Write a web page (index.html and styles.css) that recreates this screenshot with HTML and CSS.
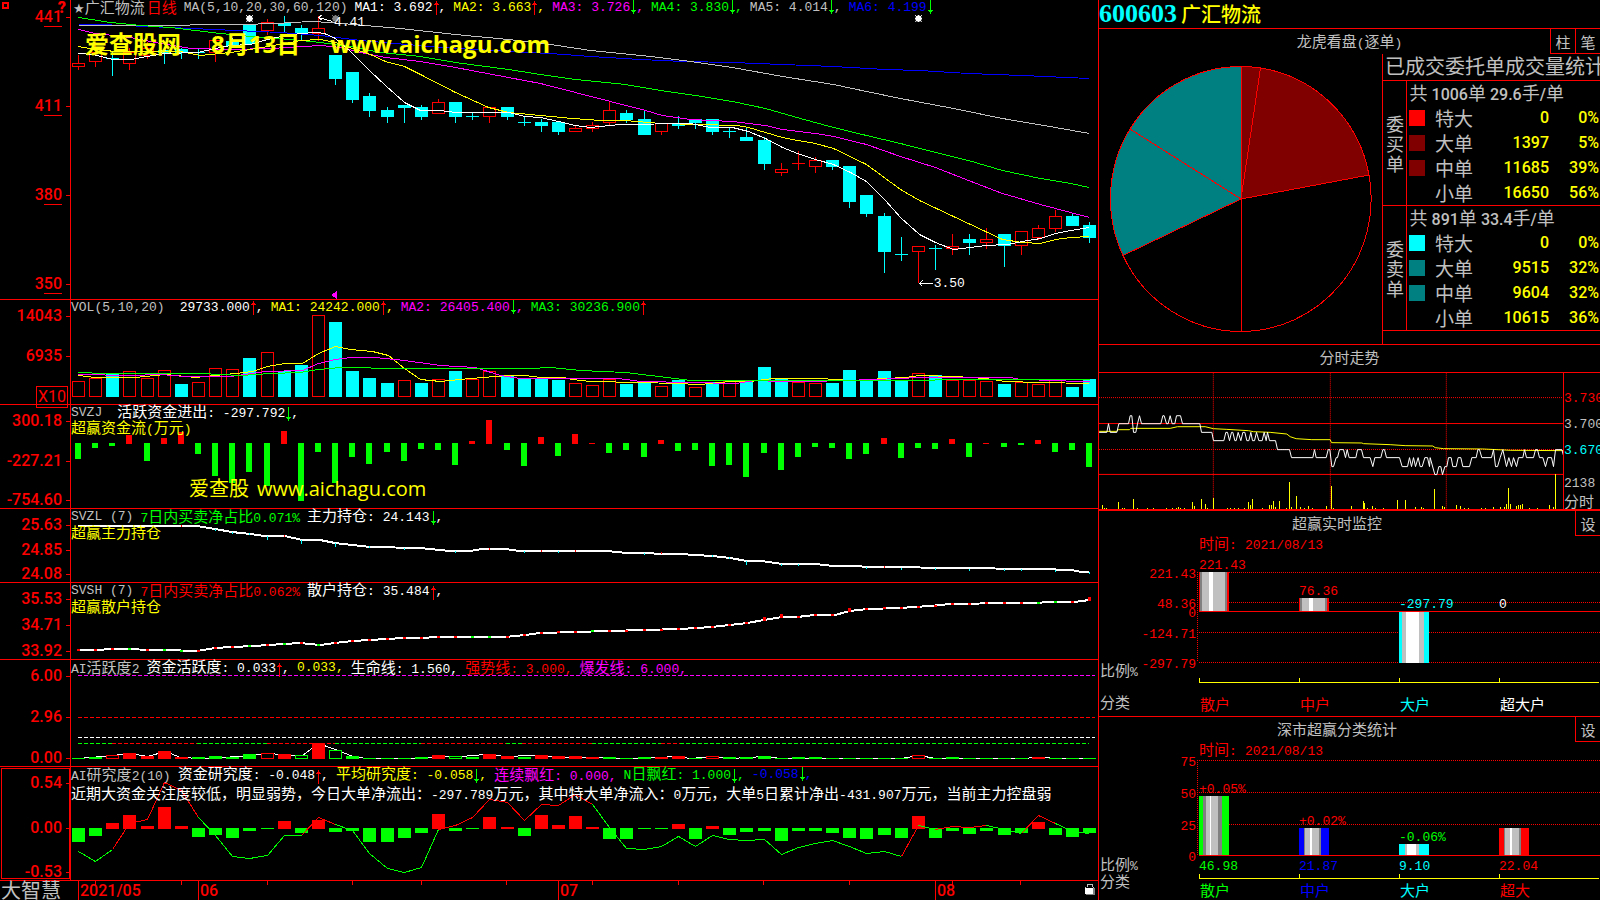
FILE: index.html
```
<!DOCTYPE html>
<html lang="zh-CN">
<head>
<meta charset="utf-8">
<title>600603 广汇物流</title>
<link rel="stylesheet" href="styles.css">
</head>
<body>
<svg class="defs" aria-hidden="true">
  <symbol id="up" viewBox="0 0 6 15"><path d="M3.5 15V1M1 4.5h5M2 3.5h3" /></symbol>
  <symbol id="down" viewBox="0 0 6 15"><path d="M3.5 0v14M1 10.5h5M2 11.5h3" /></symbol>
  <symbol id="sun" viewBox="0 0 8 8"><path d="M1 1h6v6h-6zM0 0h1v1h-1zM7 0h1v1h-1zM0 7h1v1h-1zM7 7h1v1h-1zM3 0h2v8h-2zM0 3h8v2h-8z" /></symbol>
</svg>
<div class="app">
  <main class="charts">
    <section class="panel">
      <div class="axis axis-price"><span>441</span><span>411</span><span>380</span><span>350</span><i class="handle"></i><b class="help">?</b></div>
      <div class="plot">
        <svg class="chart" id="price" viewBox="71 0 1027 299" preserveAspectRatio="none"></svg>
        <div class="legend">
          <p class="line">
            <span class="name"><span class="star">★</span><span class="zh">广汇物流</span><span class="zh period red">日线</span></span>
            <span class="params">MA(5,10,20,30,60,120)</span>
            <span class="white">MA1: 3.692<svg class="arrow red"><use href="#up"/></svg>,</span>
            <span class="yellow">MA2: 3.663<svg class="arrow red"><use href="#up"/></svg>,</span>
            <span class="magenta">MA3: 3.726<svg class="arrow green"><use href="#down"/></svg>,</span>
            <span class="green">MA4: 3.830<svg class="arrow green"><use href="#down"/></svg>,</span>
            <span class="gray">MA5: 4.014<svg class="arrow green"><use href="#down"/></svg>,</span>
            <span class="blue">MA6: 4.199<svg class="arrow green"><use href="#down"/></svg></span>
          </p>
        </div>
        <svg class="sun mark white" style="left:17%;top:5%"><use href="#sun"/></svg>
        <svg class="sun mark dim" style="left:25.4%;top:5%"><use href="#sun"/></svg>
        <svg class="sun mark white" style="left:82.2%;top:5%"><use href="#sun"/></svg>
        <span class="mark white" style="left:25.6%;top:4.9%">4.41</span>
        <span class="mark white" style="left:84%;top:92.3%">3.50</span>
        <div class="watermark"><span>爱查股网</span><span>8月13日</span><span>www.aichagu.com</span></div>
      </div>
    </section>

    <section class="panel">
      <div class="axis axis-volume"><span>14043</span><span>6935</span><span class="unit">X10</span></div>
      <div class="plot">
        <svg class="chart" id="volume" viewBox="71 300 1027 104" preserveAspectRatio="none"></svg>
        <div class="legend">
          <p class="line">
            <span class="name wide">VOL(5,10,20)</span>
            <span class="white">29733.000<svg class="arrow red"><use href="#up"/></svg>,</span>
            <span class="yellow">MA1: 24242.000<svg class="arrow red"><use href="#up"/></svg>,</span>
            <span class="magenta">MA2: 26405.400<svg class="arrow green"><use href="#down"/></svg>,</span>
            <span class="green">MA3: 30236.900<svg class="arrow red"><use href="#up"/></svg></span>
          </p>
        </div>
      </div>
    </section>

    <section class="panel">
      <div class="axis"><span>300.18</span><span>-227.21</span><span>-754.60</span></div>
      <div class="plot">
        <svg class="chart" id="flow" viewBox="71 405 1027 103" preserveAspectRatio="none"></svg>
        <div class="legend">
          <p class="line">
            <span class="name wide">SVZJ</span>
            <span class="white"><span class="zh">活跃资金进出</span>: -297.792<svg class="arrow green"><use href="#down"/></svg>,</span>
          </p>
          <p class="line yellow"><span><span class="zh">超赢资金流</span>(<span class="zh">万元</span>)</span></p>
        </div>
        <div class="watermark-thin"><span>爱查股</span><span>www.aichagu.com</span></div>
      </div>
    </section>

    <section class="panel">
      <div class="axis"><span>25.63</span><span>24.85</span><span>24.08</span></div>
      <div class="plot">
        <svg class="chart" id="major" viewBox="71 509 1027 73" preserveAspectRatio="none"></svg>
        <div class="legend">
          <p class="line">
            <span class="name">SVZL (7)</span>
            <span class="green">7<span class="zh">日内买卖净占比</span>0.071%</span>
            <span class="white"><span class="zh">主力持仓</span>: 24.143<svg class="arrow green"><use href="#down"/></svg>,</span>
          </p>
          <p class="line yellow"><span class="zh">超赢主力持仓</span></p>
        </div>
      </div>
    </section>

    <section class="panel">
      <div class="axis"><span>35.53</span><span>34.71</span><span>33.92</span></div>
      <div class="plot">
        <svg class="chart" id="retail" viewBox="71 583 1027 76" preserveAspectRatio="none"></svg>
        <div class="legend">
          <p class="line">
            <span class="name">SVSH (7)</span>
            <span class="red">7<span class="zh">日内买卖净占比</span>0.062%</span>
            <span class="white"><span class="zh">散户持仓</span>: 35.484<svg class="arrow red"><use href="#up"/></svg>,</span>
          </p>
          <p class="line yellow"><span class="zh">超赢散户持仓</span></p>
        </div>
      </div>
    </section>

    <section class="panel">
      <div class="axis"><span>6.00</span><span>2.96</span><span>0.00</span></div>
      <div class="plot">
        <svg class="chart" id="activity" viewBox="71 660 1027 106" preserveAspectRatio="none"></svg>
        <div class="legend">
          <p class="line">
            <span class="name">AI<span class="zh">活跃度</span>2</span>
            <span class="white"><span class="zh">资金活跃度</span>: 0.033<svg class="arrow red"><use href="#up"/></svg>,</span>
            <span class="yellow">0.033,</span>
            <span class="white"><span class="zh">生命线</span>: 1.560,</span>
            <span class="red"><span class="zh">强势线</span>: 3.000,</span>
            <span class="magenta"><span class="zh">爆发线</span>: 6.000,</span>
          </p>
        </div>
      </div>
    </section>

    <section class="panel">
      <div class="axis active"><span>0.54</span><span>0.00</span><span>-0.53</span></div>
      <div class="plot">
        <svg class="chart" id="research" viewBox="71 767 1027 113" preserveAspectRatio="none"></svg>
        <div class="legend">
          <p class="line">
            <span class="name">AI<span class="zh">研究度</span>2(10)</span>
            <span class="white"><span class="zh">资金研究度</span>: -0.048<svg class="arrow red"><use href="#up"/></svg>,</span>
            <span class="yellow"><span class="zh">平均研究度</span>: -0.058<svg class="arrow green"><use href="#down"/></svg>,</span>
            <span class="magenta"><span class="zh">连续飘红</span>: 0.000,</span>
            <span class="green">N<span class="zh">日飘红</span>: 1.000<svg class="arrow green"><use href="#down"/></svg>,</span>
            <span class="blue">-0.058<svg class="arrow green"><use href="#down"/></svg>,</span>
          </p>
          <p class="line comment white"><span><span class="zh">近期大资金关注度较低，明显弱势，今日大单净流出：</span>-297.789<span class="zh">万元，其中特大单净流入：</span>0<span class="zh">万元，大单</span>5<span class="zh">日累计净出</span>-431.907<span class="zh">万元，当前主力控盘弱</span></span></p>
        </div>
      </div>
    </section>

    <footer class="timeline">
      <span class="brand">大智慧</span>
      <div class="plot">
        <svg class="chart" id="ticks" viewBox="71 881 1027 19" preserveAspectRatio="none"></svg>
        <div class="months"><span>2021/05</span><span>06</span><span>07</span><span>08</span></div>
        <svg class="lock" viewBox="0 0 11 12"><path class="shackle" d="M3 4V1h5v3M1 4h1M9 4h1" /><path class="shade" d="M2 5h9v7h-9z" /><path class="body" d="M1 5h8v6h-8z" /></svg>
      </div>
    </footer>
  </main>

  <aside class="side">
    <h1 class="stock"><span class="code">600603</span><span class="title">广汇物流</span></h1>

    <section class="box">
      <header class="bar"><h2><span class="zh">龙虎看盘</span>(<span class="zh">逐单</span>)</h2><div class="tools"><button type="button">柱</button><button type="button">笔</button></div></header>
      <div class="orders">
        <svg class="pie" id="pie" viewBox="1099 54 283 290"></svg>
        <div class="order-table">
          <h3>已成交委托单成交量统计</h3>
          <table>
            <colgroup><col class="col-side"><col class="col-key"><col class="col-name"><col><col class="col-share"></colgroup>
            <tbody>
              <tr><th rowspan="5" class="side-name">委买单</th><td colspan="4" class="total">共 <b>1006</b>单 <b>29.6</b>手<b>/</b>单</td></tr>
              <tr><td class="key"><i class="swatch s-red"></i></td><th>特大</th><td class="num">0</td><td class="num">0%</td></tr>
              <tr><td class="key"><i class="swatch s-maroon"></i></td><th>大单</th><td class="num">1397</td><td class="num">5%</td></tr>
              <tr><td class="key"><i class="swatch s-maroon"></i></td><th>中单</th><td class="num">11685</td><td class="num">39%</td></tr>
              <tr><td class="key"></td><th>小单</th><td class="num">16650</td><td class="num">56%</td></tr>
            </tbody>
            <tbody>
              <tr><th rowspan="5" class="side-name">委卖单</th><td colspan="4" class="total">共 <b>891</b>单 <b>33.4</b>手<b>/</b>单</td></tr>
              <tr><td class="key"><i class="swatch s-cyan"></i></td><th>特大</th><td class="num">0</td><td class="num">0%</td></tr>
              <tr><td class="key"><i class="swatch s-teal"></i></td><th>大单</th><td class="num">9515</td><td class="num">32%</td></tr>
              <tr><td class="key"><i class="swatch s-teal"></i></td><th>中单</th><td class="num">9604</td><td class="num">32%</td></tr>
              <tr><td class="key"></td><th>小单</th><td class="num">10615</td><td class="num">36%</td></tr>
            </tbody>
          </table>
        </div>
      </div>
    </section>

    <section class="box">
      <header class="bar"><h2><span class="zh">分时走势</span></h2></header>
      <div class="intraday">
        <svg class="chart" id="intraday" viewBox="27 98 1392 409" preserveAspectRatio="none"></svg>
        <div class="prices"><span class="red">3.730</span><span class="gray">3.700</span><span class="cyan">3.670</span><span class="gray small first">2138</span><span class="gray small zh">分时</span></div>
      </div>
    </section>

    <section class="box">
      <header class="bar offset"><h2><span class="zh">超赢实时监控</span></h2><div class="tools"><button type="button">设</button></div></header>
      <svg class="bars" id="monitor" viewBox="1099 536 501 180"></svg>
    </section>

    <section class="box">
      <header class="bar offset"><h2><span class="zh">深市超赢分类统计</span></h2><div class="tools"><button type="button">设</button></div></header>
      <svg class="bars" id="stats" viewBox="1099 742 501 158"></svg>
    </section>
  </aside>
</div>
<script src="charts.js"></script>
</body>
</html>
```
FILE: styles.css
```
* { box-sizing: border-box; }
body, h1, h2, h3, p { margin: 0; font-weight: normal; }

body {
  background: #000;
  color: #c0c0c0;
  font: 13px/15px "Liberation Mono", "Noto Sans CJK SC", monospace;
  overflow: hidden;
}

.defs { position: absolute; width: 0; height: 0; }
.zh { font: 15px/15px "Noto Sans CJK SC", sans-serif; }

.white { color: #fff; fill: #fff; }
.yellow { color: #ff0; }
.magenta { color: #f0f; }
.green { color: #0f0; }
.gray { color: #c0c0c0; }
.dim { fill: #808080; }
.blue { color: #00f; }
.red { color: #f00; }
.cyan { color: #0ff; }

.app {
  display: grid;
  grid-template-columns: minmax(0, 1fr) 502px;
  height: 100vh;
}

/* left: stacked indicator panels */
.charts {
  display: grid;
  grid-template-rows:
    minmax(0, 300fr) minmax(0, 105fr) minmax(0, 104fr) minmax(0, 74fr)
    minmax(0, 77fr) minmax(0, 107fr) minmax(0, 114fr) minmax(0, 19fr);
  height: 100vh;
}
.panel {
  display: grid;
  grid-template-columns: 71px minmax(0, 1fr);
  border-bottom: 1px solid #f00;
}
.axis {
  position: relative;
  display: flex;
  flex-direction: column;
  justify-content: space-between;
  min-height: 0;
  padding-top: 8px;
  border-right: 1px solid #f00;
  color: #f00;
  font: 500 16px/16px Roboto, sans-serif;
  text-align: right;
}
.axis span { position: relative; padding-right: 8px; }
.axis span::after {
  content: "";
  position: absolute;
  right: 0;
  top: 8px;
  width: 4px;
  height: 1px;
  background: #f00;
}
.axis-price { padding: 9px 0 7px; }
.axis-price span::before {
  content: "";
  position: absolute;
  right: 8px;
  top: 17px;
  width: 18px;
  height: 1px;
  background: #f00;
}
.axis-volume { justify-content: flex-start; gap: 24px; }
.axis .unit {
  align-self: flex-end;
  margin: -2px 2px 0 0;
  padding: 2px 1px;
  border: 1px solid #f00;
  font-weight: 400;
}
.axis .unit::after { display: none; }
.axis.active { outline: 1px solid #f00; outline-offset: -2px; }
.handle { position: absolute; left: 2px; top: 2px; width: 7px; height: 7px; border: 2px solid #f00; }
.help { position: absolute; right: 4px; top: 0; font-weight: 900; }

.plot { position: relative; display: grid; min-width: 0; min-height: 0; grid-template: minmax(0, 1fr) / minmax(0, 1fr); }
.plot > .chart, .plot > .legend, .plot > .months { grid-area: 1 / 1; }
.chart { display: block; width: 100%; height: 100%; min-height: 0; shape-rendering: crispEdges; }
.chart * { vector-effect: non-scaling-stroke; }
.legend { z-index: 1; white-space: nowrap; }
.line { display: flex; align-items: center; gap: 7px; height: 15px; }
.name { color: #c0c0c0; }
.name.wide { padding-right: 8px; }
.line.comment { height: 24px; }
.star { font: 13px/15px "DejaVu Sans", sans-serif; padding-left: 2px; }
.period { padding-left: 2px; }
.arrow { width: 6px; height: 15px; vertical-align: middle; fill: none; stroke: currentColor; shape-rendering: crispEdges; }

.mark { position: absolute; z-index: 1; }
.sun { width: 7px; height: 7px; }
.watermark {
  position: absolute;
  left: 14px;
  top: 28px;
  z-index: 2;
  display: flex;
  gap: 30px;
  color: #ff0;
  font: bold 24px/32px "Open Sans", "Noto Sans CJK SC", sans-serif;
}
.watermark-thin {
  position: absolute;
  left: 118px;
  top: 72px;
  z-index: 2;
  display: flex;
  gap: 8px;
  color: #ff0;
  font: 20px/24px "Open Sans", "Noto Sans CJK SC", sans-serif;
}

.timeline { display: grid; grid-template-columns: 71px minmax(0, 1fr); }
.brand { padding-left: 1px; font: 20px/18px "Noto Sans CJK SC", sans-serif; }
.months {
  display: grid;
  grid-template-columns: 7fr 120fr 360fr 377fr 163fr;
  color: #f00;
  font: 500 16px/19px Roboto, sans-serif;
}
.months span { border-left: 1px solid #f00; padding-left: 1px; }
.months span:first-child { grid-column: 2; }
.lock { position: absolute; right: 3px; top: 2px; width: 11px; height: 12px; shape-rendering: crispEdges; }
.lock .shackle { fill: none; stroke: #c0c0c0; }
.lock .shade { fill: #808080; }
.lock .body { fill: #fff; }

/* right: quote column */
.side {
  display: grid;
  grid-template-rows: minmax(0, 29fr) minmax(0, 316fr) minmax(0, 166fr) minmax(0, 206fr) minmax(0, 183fr);
  height: 100vh;
  border-left: 1px solid #f00;
}
.stock {
  display: flex;
  align-items: center;
  gap: 4px;
  border-bottom: 1px solid #f00;
}
.code { color: #0ff; font: bold 26px/28px "Liberation Serif", serif; }
.title { color: #ff0; font: 500 20px/28px "Noto Sans CJK SC", sans-serif; }

.box { display: flex; flex-direction: column; min-height: 0; border-bottom: 1px solid #f00; }
.box:last-child { border-bottom: 0; }
.bar { position: relative; flex: none; display: grid; place-items: center; height: 25px; }
.bar.offset { padding-right: 25px; }
.bar h2 { font-size: 13px; line-height: 15px; }
.tools { position: absolute; right: 0; top: 0; display: flex; height: 25px; }
.tools button {
  width: 25px;
  padding: 0;
  border: 1px solid #f00;
  border-width: 0 0 1px 1px;
  background: #000;
  color: #c0c0c0;
  font: 15px/15px "Noto Sans CJK SC", sans-serif;
}

.orders { flex: 1; display: grid; grid-template-columns: minmax(0, 1fr) 218px; min-height: 0; }
.pie { width: 100%; height: 100%; shape-rendering: crispEdges; }
.order-table { border-left: 1px solid #f00; overflow: hidden; white-space: nowrap; font: 19px/24px "Noto Sans CJK SC", sans-serif; }
.order-table h3 { padding-left: 2px; height: 26px; font-size: 20px; line-height: 24px; }
.order-table table { width: 100%; border-collapse: collapse; table-layout: fixed; }
.order-table tbody { border-top: 1px solid #f00; border-bottom: 1px solid #f00; }
.order-table tr { height: 25px; }
.order-table td, .order-table th { padding: 0; font-weight: normal; text-align: left; line-height: 20px; vertical-align: middle; }
.col-side { width: 23px; }
.col-key { width: 29px; }
.col-name { width: 48px; }
.col-share { width: 50px; }
.order-table .side-name {
  padding: 0 2px 0 3px;
  border-right: 1px solid #f00;
  white-space: normal;
  font-size: 18px;
}
.order-table .total { padding-left: 3px; font-size: 18px; line-height: 18px; }
.order-table .total b { font: 500 16px/16px Roboto, sans-serif; }
.order-table .key { padding-left: 2px; }
.order-table .num { color: #ff0; font: 500 16px/20px Roboto, sans-serif; text-align: right; padding-right: 1px; }
.swatch { display: block; width: 16px; height: 16px; }
.s-red { background: #f00; }
.s-maroon { background: #800000; }
.s-cyan { background: #0ff; }
.s-teal { background: #008080; }

.intraday { flex: 1; display: grid; grid-template-columns: minmax(0, 1fr) 37px; min-height: 0; margin-top: 2px; border-top: 1px solid #f00; border-bottom: 1px solid #f00; }
.prices { display: flex; flex-direction: column; padding-top: 13px; border-left: 1px solid #f00; overflow: hidden; }
.prices span { flex: none; line-height: 26px; white-space: nowrap; }
.prices .small { line-height: 17px; }
.prices .first { margin-top: 11px; }

.bars { flex: 1; width: 100%; min-height: 0; shape-rendering: crispEdges; }
.bars text { font: 13px "Liberation Mono", monospace; }
.bars text.zh { font: 15px "Noto Sans CJK SC", sans-serif; }
```
FILE: charts.js
```
const NS = "http://www.w3.org/2000/svg";
const RED = "#f00", GREEN = "#0f0", CYAN = "#0ff", YELLOW = "#ff0", WHITE = "#fff";
const MAGENTA = "#f0f", BLUE = "#00f", SILVER = "#c0c0c0", GRAY = "#808080";

function el(parent, tag, attrs, text) {
  const node = document.createElementNS(NS, tag);
  for (const key in attrs) node.setAttribute(key, attrs[key]);
  if (text !== undefined) node.textContent = text;
  parent.appendChild(node);
  return node;
}
const $ = id => document.getElementById(id);
const dayX = i => Math.round(78 + i * 17.14);
const seg = (svg, x1, y1, x2, y2, stroke, dash) =>
  el(svg, "path", { d: `M${x1} ${y1}L${x2} ${y2}`, stroke, fill: "none", "stroke-dasharray": dash || "none" });
const line = (svg, points, stroke, width) =>
  el(svg, "polyline", { points, fill: "none", stroke, "stroke-width": width || 1, transform: width ? "" : "translate(0.5 0.5)" });
const rect = (svg, x, y, width, height, fill) =>
  el(svg, "rect", { x, y, width, height: Math.max(1, height), fill });
const hollow = (svg, x, y, width, height, stroke) =>
  el(svg, "rect", { x: x + 0.5, y: y + 0.5, width: width - 1, height: Math.max(1, height - 1), fill: "#000", stroke });

/* daily candles: kind, high, body top, body bottom, low */
const candles = [
  "r",55,63,67,70, "r",45,52,62,67, "c",52,58,59,76, "r",48,52,64,70, "r",42,48,56,59,
  "c",48,50,53,64, "c",48,49,53,59, "c",49,52,53,59, "r",36,40,53,62, "c",38,41,46,48,
  "c",25,25,44,44, "r",19,22,31,35, "c",16,23,26,33, "c",25,28,33,40, "r",16,28,34,41,
  "c",55,55,79,85, "c",72,72,100,103, "c",93,96,111,117, "c",107,110,117,123, "c",105,105,108,123,
  "c",105,107,117,120, "r",99,102,114,114, "c",102,102,117,123, "c",113,116,117,120, "r",107,107,117,123,
  "c",107,107,117,120, "c",117,122,123,126, "c",119,122,126,132, "c",122,122,132,135, "r",125,128,132,132,
  "r",122,125,129,132, "r",101,110,123,125, "c",110,113,120,123, "c",110,119,135,135, "r",123,123,132,135,
  "c",116,123,126,129, "c",119,119,123,129, "c",119,119,132,135, "c",128,131,132,138, "c",128,137,141,141,
  "c",137,140,164,170, "r",163,169,173,176, "r",151,163,164,170, "r",157,160,167,173, "c",160,160,167,170,
  "c",166,166,202,208, "c",195,195,214,217, "c",213,216,252,273, "c",237,254,255,261, "r",246,246,252,283,
  "c",245,248,249,270, "r",234,246,249,255, "c",234,239,243,255, "r",228,239,243,249, "c",234,234,246,267,
  "r",231,231,246,255, "r",225,228,238,240, "r",210,216,229,232, "c",213,216,226,226, "c",222,225,238,243
];
const price = $("price");
for (let i = 0; i < 60; i++) {
  const [kind, high, top, bottom, low] = candles.slice(i * 5, i * 5 + 5);
  const x = dayX(i), color = kind === "r" ? RED : CYAN;
  if (low > high) rect(price, x, high, 1, low - high, color);
  if (kind === "r" && bottom - top > 1) hollow(price, x - 6, top, 13, bottom - top, color);
  else rect(price, x - 6, top, 13, bottom - top, color);
}
line(price, "78,24 100,24 170,27 235,30 280,32 320,35 360,40 430,46 508,51 550,53 590,56 640,59 683,61 732,62 782,64 833,66 885,69 919,70 968,73 1022,75 1089,78", BLUE);
line(price, "78,25 140,25 240,24 275,23 310,21 330,22 365,25 400,28 455,34 508,39 550,44 590,50 650,56 683,60 732,67 782,76 833,84 866,91 900,98 953,108 1002,118 1055,127 1089,133", SILVER);
line(price, "78,17 110,22 140,25 170,27 220,33 250,36 290,39 320,42 350,46 380,52 420,56 455,62 508,69 540,74 575,79 625,84 660,90 695,95 732,101 765,108 800,118 833,127 866,135 900,143 935,152 968,160 1002,170 1040,178 1070,183 1089,187", GREEN);
line(price, "78,29 95,33 130,37 160,43 190,48 230,49 270,48 320,45 340,47 365,53 385,57 420,61 455,67 508,77 540,83 575,92 610,101 645,110 662,115 690,119 732,121 765,125 782,129 815,133 833,136 866,144 900,156 935,167 968,180 1002,193 1040,204 1070,212 1089,217", MAGENTA);
line(price, "78,46 95,49 115,51 180,51 200,55 230,52 250,49 267,46 285,43 300,40 320,39 335,42 352,48 370,54 385,61 404,66 420,74 455,92 488,107 508,112 540,115 572,118 600,120 625,120 660,123 737,125 748,127 765,132 782,137 797,140 815,143 833,148 866,164 900,189 919,200 953,216 985,231 1002,239 1022,242 1040,243 1055,239 1070,237 1089,236", YELLOW);
line(price, "78,53 92,54 113,59 131,59 146,56 165,53 197,52 215,48 230,45 250,44 267,39 285,35 300,33 316,32 324,33 335,38 350,51 370,71 385,85 404,102 420,110 440,110 455,112 508,112 525,116 540,117 558,121 575,125 590,127 600,126 620,124 690,123 710,127 732,127 748,131 765,138 782,147 797,153 815,159 833,164 850,172 866,181 885,200 900,217 919,234 935,242 953,249 970,247 985,245 1007,244 1022,241 1040,238 1055,233 1070,230 1089,227", WHITE);
line(price, "322,14 318,17 322,20", WHITE);
line(price, "318,17 332,21", WHITE);
line(price, "922,280 919,283 922,286", WHITE);
line(price, "919,283 932,283", WHITE);
el(price, "path", { d: "M331 295l6-4v8z", fill: MAGENTA });

/* volume: kind per day, bar top */
const volumeKinds = "rrcrrrcrrrcrccrccccrcrcrrcccc" + "rrrccrcrcrcccrrccccc" + "rcrrrcrrrcc";
const volumeTops = [381,378,374,371,378,370,384,382,368,369,358,352,371,365,315,322,371,378,383,380,383,379,371,379,371,376,378,379,380,383,385,379,384,381,386,380,387,382,381,382,367,379,382,383,383,370,381,371,381,373,375,380,380,381,384,382,384,380,387,379];
const volume = $("volume");
volumeTops.forEach((top, i) => {
  const draw = volumeKinds[i] === "r" ? hollow : rect;
  draw(volume, dayX(i) - 6, top, 13, 397 - top, volumeKinds[i] === "r" ? RED : CYAN);
});
line(volume, "78,375 95,377 135,377 165,374 195,377 235,373 252,371 267,366 285,363 302,363 318,353 335,346 350,349 372,351 388,355 404,368 420,379 440,381 470,378 508,375 525,375 540,377 563,377 572,379 590,381 640,382 675,383 700,384 730,381 750,381 772,378 820,378 850,380 885,378 905,377 919,375 955,376 985,378 1005,381 1040,382 1089,383", YELLOW);
line(volume, "78,374 130,375 160,374 185,376 230,376 265,371 302,370 318,363 335,359 350,357 375,357 404,360 440,365 475,367 500,375 520,378 618,378 640,381 690,382 735,383 755,380 780,381 810,381 875,379 920,377 1010,377 1020,379 1055,380 1075,381 1089,381", MAGENTA);
line(volume, "78,372 104,373 200,373 240,375 270,373 300,372 318,369 340,367 400,368 530,368 550,367 580,370 625,372 650,375 675,378 690,380 860,380 930,380 940,379 1089,379", GREEN);

/* capital flow: bar end, above or below the 443 baseline */
const flowEnds = [459,448,446,435,461,438,432,454,476,483,472,486,431,501,452,483,457,464,452,461,449,450,465,441,420,450,466,437,456,434,443,453,450,457,440,451,450,466,465,477,453,470,457,447,448,459,454,438,458,448,449,439,457,443,447,445,440,452,450,467];
flowEnds.forEach((end, i) => {
  const x = dayX(i) - 3;
  if (end > 443) rect($("flow"), x, 443, 6, end - 443, GREEN);
  else rect($("flow"), x, end, 6, 444 - end, RED);
});

/* holdings of large and retail accounts */
const major = $("major");
line(major, "78,526 197,526 215,529 232,532 250,534 265,536 285,536 302,540 320,540 335,543 370,547 420,548 450,551 470,551 482,549 505,549 520,551 607,551 627,553 680,554 712,556 730,558 747,561 762,561 782,564 815,564 833,566 890,567 950,568 1040,569 1072,570 1081,572 1089,572", WHITE, 2);
[8,529,9,532,10,533,11,536,13,540,15,543,17,546,19,548,22,551,26,551,28,551,33,553,37,555,38,557,39,561,41,564,42,564,46,567,48,568,50,568,52,569,54,569,55,569,57,570,59,572].forEach((v, k, a) => {
  if (k % 2 === 0) rect(major, dayX(v), a[k + 1], 1, [11, 13, 15, 39].includes(v) ? 4 : 2, CYAN);
});
[6,525,12,535,24,548,27,550,29,550,34,552,47,566].forEach((v, k, a) => {
  if (k % 2 === 0) rect(major, dayX(v), a[k + 1], 1, 2, RED);
});
const retail = $("retail");
const retailLine = line(retail, "78,650 95,650 113,649 165,650 197,651 215,648 232,647 255,646 268,645 300,643 320,645 335,643 352,641 370,640 404,638 455,637 505,637 525,635 540,633 575,632 608,631 645,630 680,629 712,627 747,623 764,620 782,617 797,617 815,615 835,615 850,611 867,609 900,608 930,606 950,604 1010,603 1075,602 1089,600", WHITE, 2);
const knots = Array.from(retailLine.points);
for (let i = 0; i < 60; i++) {
  const x = dayX(i);
  const k = Math.max(1, knots.findIndex(p => p.x >= x));
  const a = knots[k - 1], b = knots[k];
  const y = Math.round(a.y + (b.y - a.y) * (x - a.x) / (b.x - a.x));
  const green = [3, 5, 6, 10, 12, 14, 23, 24, 30, 56, 57].includes(i);
  const tall = [40, 41, 45, 59].includes(i) ? 2 : 0;
  rect(retail, x - 1, y - 1 - tall, 3, 2 + tall, green ? GREEN : RED);
}

/* activity: reference levels, then bars (kind upper case = hollow) */
const activity = $("activity");
seg(activity, 78, 675.5, 1095, 675.5, MAGENTA, "4 2");
seg(activity, 78, 717.5, 1095, 717.5, RED, "4 2");
seg(activity, 78, 737.5, 1095, 737.5, WHITE, "4 2");
[78, 112, 197, 267, 335, 421, 506, 522, 592, 661, 680, 1089].forEach((x, i, a) => {
  if (i < 11) seg(activity, x, 743.5, a[i + 1], 743.5, [1, 3, 5, 7, 9].includes(i) ? RED : GREEN, "4 2");
});
line(activity, "78,758 90,757 112,755 130,753 147,756 165,751 180,757 200,758 240,756 268,753 295,755 302,755 318,743 335,749 355,757 370,758 420,758 440,756 460,756 485,754 505,756 530,755 560,757 575,757 640,758 675,756 690,758 712,756 730,758 764,756 780,758 900,758 919,755 935,758 1020,758 1038,757 1060,758 1089,758", WHITE);
const activityKinds = "ggRrrrrgggg" + "RrGrGgggggr" + "Ggrrgrrrrggg" + "rrgRggggggg" + "gggg" + "Rgggggg" + "rggg";
const activityTops = [758,757,755,753,756,751,757,757,756,757,754,753,754,755,743,750,756,758,758,758,757,755,756,757,754,756,757,755,756,756,757,757,758,757,757,756,758,756,757,757,756,758,757,757,758,758,758,758,758,755,758,757,758,758,758,758,757,758,758,758];
activityTops.forEach((top, i) => {
  const kind = activityKinds[i];
  const draw = kind === kind.toUpperCase() ? hollow : rect;
  draw(activity, dayX(i) - 6, top, 13, 759 - top, kind.toLowerCase() === "r" ? RED : GREEN);
});

/* research: line values and bars around the 828 baseline */
const research = $("research");
const researchLine = [851,861,849,823,819,782,790,817,835,856,858,855,835,835,817,824,830,853,868,872,867,829,825,817,799,802,820,804,805,794,804,827,848,849,846,836,846,835,839,840,839,854,847,843,840,846,853,851,856,825,829,826,827,825,829,833,815,823,831,833];
const researchEnds = [842,836,823,815,826,807,826,837,835,838,831,829,821,833,820,832,831,842,842,838,833,814,831,829,817,827,836,815,825,816,827,839,839,829,829,824,839,826,835,832,831,841,831,831,833,838,839,835,838,816,838,831,834,831,835,833,822,835,837,833];
researchEnds.forEach((end, i) => {
  if (end > 828) rect(research, dayX(i) - 6, 828, 13, end - 828, GREEN);
  else rect(research, dayX(i) - 6, end, 13, 829 - end, RED);
});
[[0, 2, GREEN], [2, 7, RED], [7, 13, GREEN], [13, 15, RED], [15, 21, GREEN], [21, 30, RED], [30, 48, GREEN], [48, 49, RED], [49, 50, GREEN], [50, 53, RED], [53, 55, GREEN], [55, 57, RED], [57, 59, GREEN]].forEach(([from, to, color]) => {
  const pts = [];
  for (let i = from; i <= to; i++) pts.push(dayX(i) + "," + researchLine[i]);
  line(research, pts.join(" "), color);
});

[95, 181, 267, 352, 421, 506, 592, 678, 763, 849, 952, 1020].forEach(x => rect($("ticks"), x, 881, 1, 4, RED));

/* order pie */
const pie = $("pie");
const slice = (from, to, fill) =>
  el(pie, "path", { d: `M1241 199L${from}A130.5 132.5 0 0 1 ${to}Z`, fill, stroke: RED });
slice("1241 66.5", "1260.5 68", "#800000");
slice("1260.5 68", "1369 175", "#800000");
slice("1369 175", "1241 331.5", "#000");
slice("1241 331.5", "1123 255.5", "#000");
slice("1123 255.5", "1130 129", "#008080");
slice("1130 129", "1241 66.5", "#008080");

/* intraday price, average and volume; three units per pixel */
const day = $("intraday");
[370, 721, 1069].forEach(x => seg(day, x, 99, x, 508, RED, "1 1"));
seg(day, 27, 172, 1419, 172, RED, "1 1");
seg(day, 27, 328, 1419, 328, RED, "1 1");
seg(day, 27, 250, 1419, 250, RED);
seg(day, 27, 403, 1419, 403, RED);
[38,495,44,503,50,503,86,486,97,503,103,503,130,477,142,504,172,504,190,504,230,504,248,504,260,504,266,500,272,504,284,504,307,486,313,498,334,477,346,492,352,504,370,474,412,504,422,504,434,504,446,504,464,504,475,486,481,495,487,477,517,504,538,495,544,495,550,483,556,500,568,483,590,504,598,426,604,502,619,468,631,500,643,504,655,498,667,504,709,498,724,438,730,504,784,498,820,483,823,489,832,504,847,498,856,504,880,504,922,480,946,480,976,500,994,500,1000,504,1033,447,1057,498,1063,501,1099,495,1111,498,1123,504,1135,504,1174,504,1186,504,1210,500,1231,500,1243,501,1249,492,1255,444,1261,492,1279,498,1285,495,1291,495,1297,492,1318,504,1342,504,1378,495,1390,500,1396,402].forEach((v, k, a) => {
  if (k % 2 === 0) rect(day, v - 1, a[k + 1], 3, 508 - a[k + 1], YELLOW);
});
line(day, "27,273 80,273 84,268 118,268 122,264 240,264 262,259 345,259 370,265 410,267 475,271 490,274 540,276 590,281 600,289 618,295 665,298 720,298 724,307 815,308 820,310 900,313 945,316 1028,317 1035,322 1060,325 1178,326 1260,330 1421,331", YELLOW);
line(day, "27,276 50,276 55,250 60,276 80,276 86,250 115,250 120,226 125,226 130,276 137,276 142,250 148,226 154,250 212,250 218,226 222,226 229,250 234,250 240,226 246,250 254,250 259,226 271,226 277,250 329,250 334,276 365,276 370,301 401,301 407,276 412,276 418,301 424,276 428,276 434,301 438,301 444,276 452,301 458,276 464,276 470,301 476,301 482,276 487,301 493,301 499,276 506,301 516,301 522,276 528,301 532,276 538,301 556,301 562,328 598,328 604,352 668,352 673,328 678,352 708,352 714,328 719,328 725,379 730,379 738,352 742,352 748,328 760,328 766,352 771,328 777,352 797,352 802,328 814,328 820,352 840,352 848,379 854,352 872,352 878,328 883,328 889,352 928,352 936,379 952,379 958,352 964,379 970,352 976,379 984,352 990,379 996,379 1004,352 1012,352 1018,379 1020,352 1034,403 1040,403 1046,379 1052,379 1057,403 1064,379 1070,379 1075,352 1083,352 1088,379 1098,379 1104,352 1112,352 1118,379 1138,379 1145,352 1158,352 1163,328 1168,328 1175,352 1204,352 1210,328 1216,379 1222,379 1230,352 1238,328 1249,379 1256,352 1264,379 1270,352 1279,379 1285,352 1298,352 1303,328 1309,352 1330,352 1336,328 1342,328 1348,352 1358,352 1366,379 1373,352 1384,352 1390,379 1396,328 1415,328 1421,349", WHITE);

/* category bar charts */
function label(svg, x, y, text, fill, zh, end) {
  el(svg, "text", { x, y: y + 5, fill, class: zh ? "zh" : "", "text-anchor": end ? "end" : "start" }, text);
}
function stripes(svg, x, y, height, parts) {
  for (let i = 0; i < parts.length; i += 2) {
    rect(svg, x, y, parts[i + 1], height, parts[i]);
    x += parts[i + 1];
  }
}
function frame(svg, top, bottom, dotted, base, axisY, dateY) {
  seg(svg, 1197.5, top, 1197.5, bottom, RED, "1 1");
  dotted.forEach(y => seg(svg, 1199, y, 1600, y, RED, "1 1"));
  seg(svg, 1199, base, 1600, base, RED);
  seg(svg, 1199, axisY, 1599, axisY, YELLOW);
  [1199, 1299, 1399, 1499].forEach(x => rect(svg, x, axisY - 4.5, 1, 5, YELLOW));
  label(svg, 1199, dateY, "时间", RED, true);
  label(svg, 1229, dateY, ":", RED);
  label(svg, 1245, dateY, "2021/08/13", RED);
}
const monitor = $("monitor");
frame(monitor, 572, 662, [572.5, 602.5, 632.5, 662.5], 611.5, 682.5, 544);
stripes(monitor, 1199, 572, 39, [RED, 1, GRAY, 2, SILVER, 7, WHITE, 4, SILVER, 12, GRAY, 2, RED, 2]);
stripes(monitor, 1299, 598, 13, [RED, 1, GRAY, 2, SILVER, 7, WHITE, 4, SILVER, 12, GRAY, 2, RED, 2]);
stripes(monitor, 1399, 612, 51, [CYAN, 3, SILVER, 4, WHITE, 13, SILVER, 5, CYAN, 5]);
[["221.43", 573], ["48.36", 603], ["0", 612], ["-124.71", 633], ["-297.79", 663]].forEach(([t, y]) => label(monitor, 1196, y, t, RED, false, true));
label(monitor, 1199, 564, "221.43", RED);
label(monitor, 1299, 590, "76.36", RED);
label(monitor, 1399, 603, "-297.79", CYAN);
label(monitor, 1499, 603, "0", WHITE);
label(monitor, 1100, 671, "比例", SILVER, true);
label(monitor, 1130, 671, "%", SILVER);
label(monitor, 1100, 703, "分类", SILVER, true);
label(monitor, 1200, 705, "散户", RED, true);
label(monitor, 1300, 705, "中户", RED, true);
label(monitor, 1400, 705, "大户", CYAN, true);
label(monitor, 1500, 705, "超大户", WHITE, true);

const stats = $("stats");
frame(stats, 760, 856, [760.5, 792.5, 824.5], 855.5, 878.5, 750);
stripes(stats, 1199, 796, 59, [GREEN, 4, GRAY, 3, SILVER, 4, WHITE, 1, SILVER, 7, GRAY, 4, GREEN, 7]);
stripes(stats, 1299, 828, 27, [BLUE, 5, GRAY, 1, SILVER, 5, WHITE, 2, SILVER, 7, GRAY, 2, BLUE, 8]);
stripes(stats, 1399, 844, 11, [CYAN, 6, SILVER, 2, WHITE, 9, SILVER, 3, CYAN, 10]);
stripes(stats, 1499, 828, 27, [RED, 5, GRAY, 1, SILVER, 5, WHITE, 2, SILVER, 7, GRAY, 2, RED, 8]);
[["75", 761], ["50", 793], ["25", 825], ["0", 856]].forEach(([t, y]) => label(stats, 1196, y, t, RED, false, true));
label(stats, 1199, 788, "+0.05%", RED);
label(stats, 1299, 820, "+0.02%", RED);
label(stats, 1399, 836, "-0.06%", GREEN);
label(stats, 1199, 865, "46.98", GREEN);
label(stats, 1299, 865, "21.87", BLUE);
label(stats, 1399, 865, "9.10", CYAN);
label(stats, 1499, 865, "22.04", RED);
label(stats, 1100, 865, "比例", SILVER, true);
label(stats, 1130, 865, "%", SILVER);
label(stats, 1100, 882, "分类", SILVER, true);
label(stats, 1200, 891, "散户", GREEN, true);
label(stats, 1300, 891, "中户", BLUE, true);
label(stats, 1400, 891, "大户", CYAN, true);
label(stats, 1500, 891, "超大", RED, true);
```
